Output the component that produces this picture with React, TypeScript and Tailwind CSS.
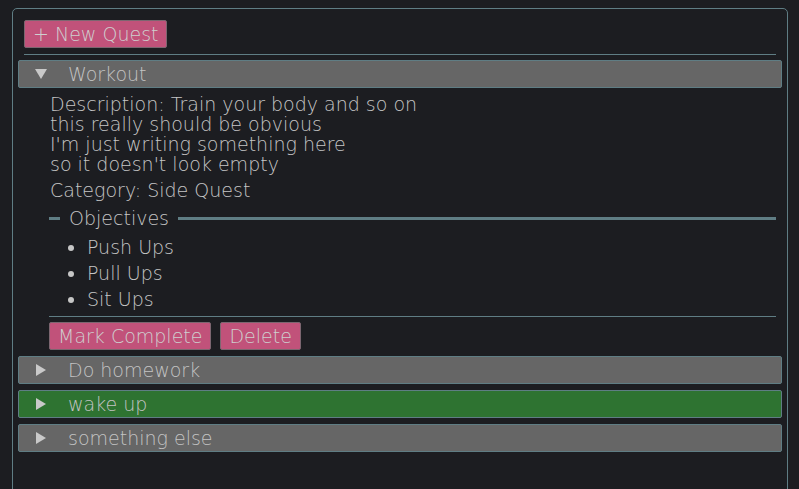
import { useState } from 'react';

interface Quest {
    id: number;
    title: string;
    done: boolean;
    description?: string[];
    category?: string;
    objectives?: string[];
}

const quests: Quest[] = [
    {
        id: 1,
        title: 'Workout',
        done: false,
        description: [
            'Description: Train your body and so on',
            'this really should be obvious',
            "I'm just writing something here",
            "so it doesn't look empty",
        ],
        category: 'Side Quest',
        objectives: ['Push Ups', 'Pull Ups', 'Sit Ups'],
    },
    { id: 2, title: 'Do homework', done: false },
    { id: 3, title: 'wake up', done: true },
    { id: 4, title: 'something else', done: false },
];

function Arrow({ open }: { open: boolean }) {
    return (
        <svg width="12" height="14" viewBox="0 0 12 14" className="ml-[16px] mr-[21px]">
            {open
                ? <polygon points="0,2 12,2 6,12" fill="#c9c9c9" />
                : <polygon points="1,1 11,7 1,13" fill="#c9c9c9" />}
        </svg>
    );
}

function QuestItem({ quest, open, onToggle }: { quest: Quest; open: boolean; onToggle: () => void }) {
    return (
        <div>
            <button
                onClick={onToggle}
                className={`flex h-[28px] w-full items-center rounded-[2px] border border-[#5f7d84] text-left ${quest.done ? 'bg-[#2e7331]' : 'bg-[#666666]'}`}
            >
                <Arrow open={open} />
                <span className="text-[19px] leading-none text-[#c4c4c4]">{quest.title}</span>
            </button>
            {open && (
                <div className="pl-[31px] pr-[6px]">
                    <div className="mt-[6px] pl-[1px] text-[19px] leading-[20px]">
                        {quest.description?.map(line => <div key={line}>{line}</div>)}
                    </div>
                    <div className="mt-[6px] pl-[1px] text-[19px] leading-[20px]">Category: {quest.category}</div>
                    <fieldset className="mt-[8px] border-t-[3px] border-[#5f7d84] pl-[11px]">
                        <legend className="px-[9px] text-[19px] leading-[20px]">Objectives</legend>
                        <ul className="mt-[6px] list-disc pl-[27px] text-[19px] leading-[26px]">
                            {quest.objectives?.map(o => <li key={o}>{o}</li>)}
                        </ul>
                    </fieldset>
                    <div className="mt-[4px] flex gap-[9px] border-t border-[#5f7d84] pt-[5px]">
                        <button className="h-[28px] rounded-[2px] border border-[#7c6670] bg-[#c1527a] px-[8px] text-[19px] leading-none text-[#cfcfcf]">Mark Complete</button>
                        <button className="h-[28px] rounded-[2px] border border-[#7c6670] bg-[#c1527a] px-[8px] text-[19px] leading-none text-[#cfcfcf]">Delete</button>
                    </div>
                </div>
            )}
        </div>
    );
}

export default function App() {
    const [openId, setOpenId] = useState<number | null>(1);

    return (
        <div className="min-h-[489px] bg-[#1c1d21] pl-[12px] pr-[11px] pt-[8px] font-extralight text-[#c6c6c6]" style={{ fontFamily: '"DejaVu Sans", sans-serif' }}>
            <div className="min-h-[490px] rounded-t-[5px] border border-[#5f7d84] px-[5px] pt-[11px]">
                <div className="px-[6px]">
                    <button className="h-[28px] rounded-[2px] border border-[#7c6670] bg-[#c1527a] px-[8px] text-[19px] leading-none text-[#cfcfcf]">+ New Quest</button>
                    <div className="mt-[6px] border-t border-[#5f7d84]" />
                </div>
                <div className="mt-[5px] flex flex-col gap-[6px]">
                    {quests.map(q => (
                        <QuestItem
                            key={q.id}
                            quest={q}
                            open={openId === q.id}
                            onToggle={() => setOpenId(openId === q.id ? null : q.id)}
                        />
                    ))}
                </div>
            </div>
        </div>
    );
}
